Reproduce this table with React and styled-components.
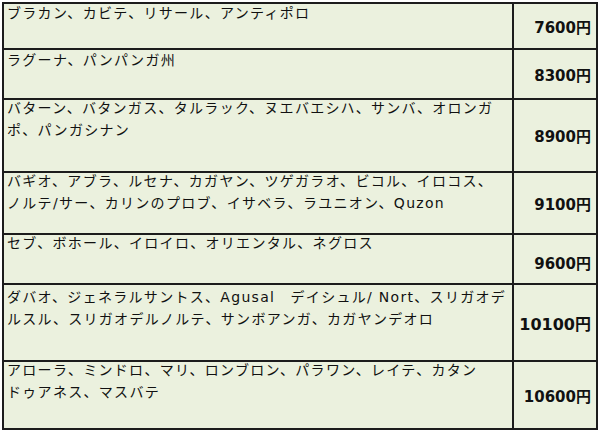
import React from 'react';
import styled, { createGlobalStyle } from 'styled-components';

const rows = [
  { height: 44, top: 1, lines: ['ブラカン、カビテ、リサール、アンティポロ'], price: '7600円' },
  { height: 48, top: 2, lines: ['ラグーナ、パンパンガ州'], price: '8300円' },
  {
    height: 71,
    top: 0,
    lines: ['バターン、バタンガス、タルラック、ヌエバエシハ、サンバ、オロンガ', 'ポ、パンガシナン'],
    price: '8900円',
  },
  {
    height: 60,
    top: 0,
    lines: ['バギオ、アブラ、ルセナ、カガヤン、ツゲガラオ、ビコル、イロコス、', 'ノルテ/サー、カリンのプロブ、イサベラ、ラユニオン、Quzon'],
    price: '9100円',
  },
  { height: 48, top: 0, lines: ['セブ、ボホール、イロイロ、オリエンタル、ネグロス'], price: '9600円', low: true },
  {
    height: 75,
    top: 4,
    lines: ['ダバオ、ジェネラルサントス、Agusal　デイシュル/ Nort、スリガオデ', 'ルスル、スリガオデルノルテ、サンボアンガ、カガヤンデオロ'],
    price: '10100円',
    big: true,
  },
  {
    height: 66,
    top: 0,
    lines: ['アローラ、ミンドロ、マリ、ロンブロン、パラワン、レイテ、カタン', 'ドゥアネス、マスバテ'],
    price: '10600円',
  },
];

const GlobalStyle = createGlobalStyle`
  body {
    margin: 0;
    background: #ffffff;
  }
`;

const Page = styled.div`
  padding: 2px;
  width: 600px;
  height: 430px;
  box-sizing: border-box;
`;

const Table = styled.div`
  width: 596px;
  border: 2px solid #1c1c1c;
  box-sizing: border-box;
  background: #ebf1de;
`;

const Row = styled.div`
  display: grid;
  grid-template-columns: 508px 1fr;
  height: ${(p) => p.$height}px;

  & + & {
    border-top: 2px solid #1c1c1c;
  }
`;

const Areas = styled.div`
  display: flex;
  flex-direction: column;
  gap: 6px;
  padding: ${(p) => p.$top}px 0 0 3px;
  font-family: "DejaVu Sans", "Noto Sans CJK JP", sans-serif;
  font-size: 14px;
  letter-spacing: 1.3px;
  line-height: 16px;
  color: #111;
  white-space: nowrap;
  overflow: hidden;
`;

const Line = styled.div``;

const Price = styled.div`
  display: flex;
  align-items: center;
  justify-content: flex-end;
  padding: ${(p) => (p.$low ? '6px' : '0')} 5px 0 0;
  border-left: 2px solid #1c1c1c;
  font-family: "DejaVu Sans", "Noto Sans CJK JP", sans-serif;
  font-weight: bold;
  font-size: ${(p) => (p.$big ? 16 : 15)}px;
  color: #111;
`;

export default function App() {
  return (
    <>
      <GlobalStyle />
      <Page>
        <Table>
          {rows.map((row) => (
            <Row key={row.price} $height={row.height}>
              <Areas $top={row.top}>
                {row.lines.map((line) => (
                  <Line key={line}>{line}</Line>
                ))}
              </Areas>
              <Price $big={row.big} $low={row.low}>
                {row.price}
              </Price>
            </Row>
          ))}
        </Table>
      </Page>
    </>
  );
}
